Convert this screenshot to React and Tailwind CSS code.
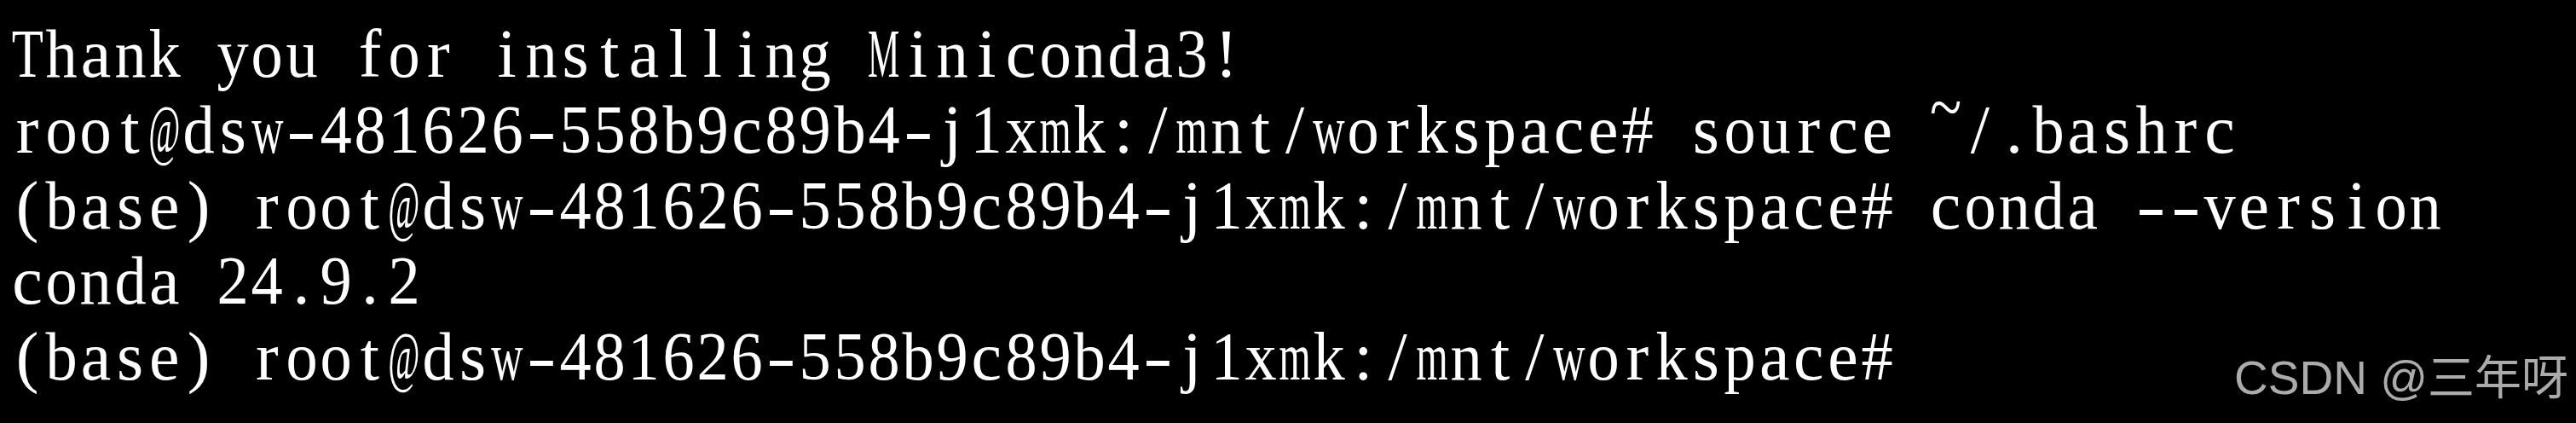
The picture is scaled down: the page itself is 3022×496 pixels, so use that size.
const W = {
  a: 444, b: 500, c: 444, d: 500, e: 444, f: 333, g: 500, h: 500, i: 278, j: 278,
  k: 500, l: 278, m: 778, n: 500, o: 500, p: 500, q: 500, r: 333, s: 389, t: 278,
  u: 500, v: 500, w: 722, x: 500, y: 500, z: 444, T: 611, M: 889, "@": 921,
  "-": 333, ":": 278, "/": 278, "#": 500, "~": 541, ".": 250, "(": 333, ")": 333,
  "!": 333, " ": 250,
};
const FS = 80;
const CELL = 40.2;

function Cell({ ch }) {
  const w = ((W[ch] ?? 500) * FS) / 1000;
  let s = Math.min(1, (CELL - 3) / w);
  if (ch === "-") s = (CELL - 6) / w;
  return (
    <span
      className={
        ch === "~"
          ? "flex w-[40.2px] shrink-0 justify-center -translate-y-[26px]"
          : "flex w-[40.2px] shrink-0 justify-center"
      }
    >
      <span className="block shrink-0" style={{ transform: `scaleX(${s})` }}>
        {ch === " " ? "\u00a0" : ch}
      </span>
    </span>
  );
}

export default function App() {
  const lines = [
    "Thank you for installing Miniconda3!",
    "root@dsw-481626-558b9c89b4-j1xmk:/mnt/workspace# source ~/.bashrc",
    "(base) root@dsw-481626-558b9c89b4-j1xmk:/mnt/workspace# conda --version",
    "conda 24.9.2",
    "(base) root@dsw-481626-558b9c89b4-j1xmk:/mnt/workspace#",
  ];
  return (
    <div className="relative w-[3022px] h-[496px] bg-black overflow-hidden">
      <div className="flex flex-col pt-[19px] pl-[12px] text-white font-['Liberation_Serif',serif] text-[80px] leading-[88.75px] whitespace-pre">
        {lines.map((l, i) => (
          <div key={i} className="h-[88.75px] flex">
            {Array.from(l).map((ch, j) => (
              <Cell key={j} ch={ch} />
            ))}
          </div>
        ))}
      </div>
      <div className="absolute right-[9px] top-[416px] text-[55px] leading-none text-[#ababab] font-['Liberation_Sans','Noto_Sans_CJK_SC',sans-serif] whitespace-pre">
        CSDN @三年呀
      </div>
    </div>
  );
}
